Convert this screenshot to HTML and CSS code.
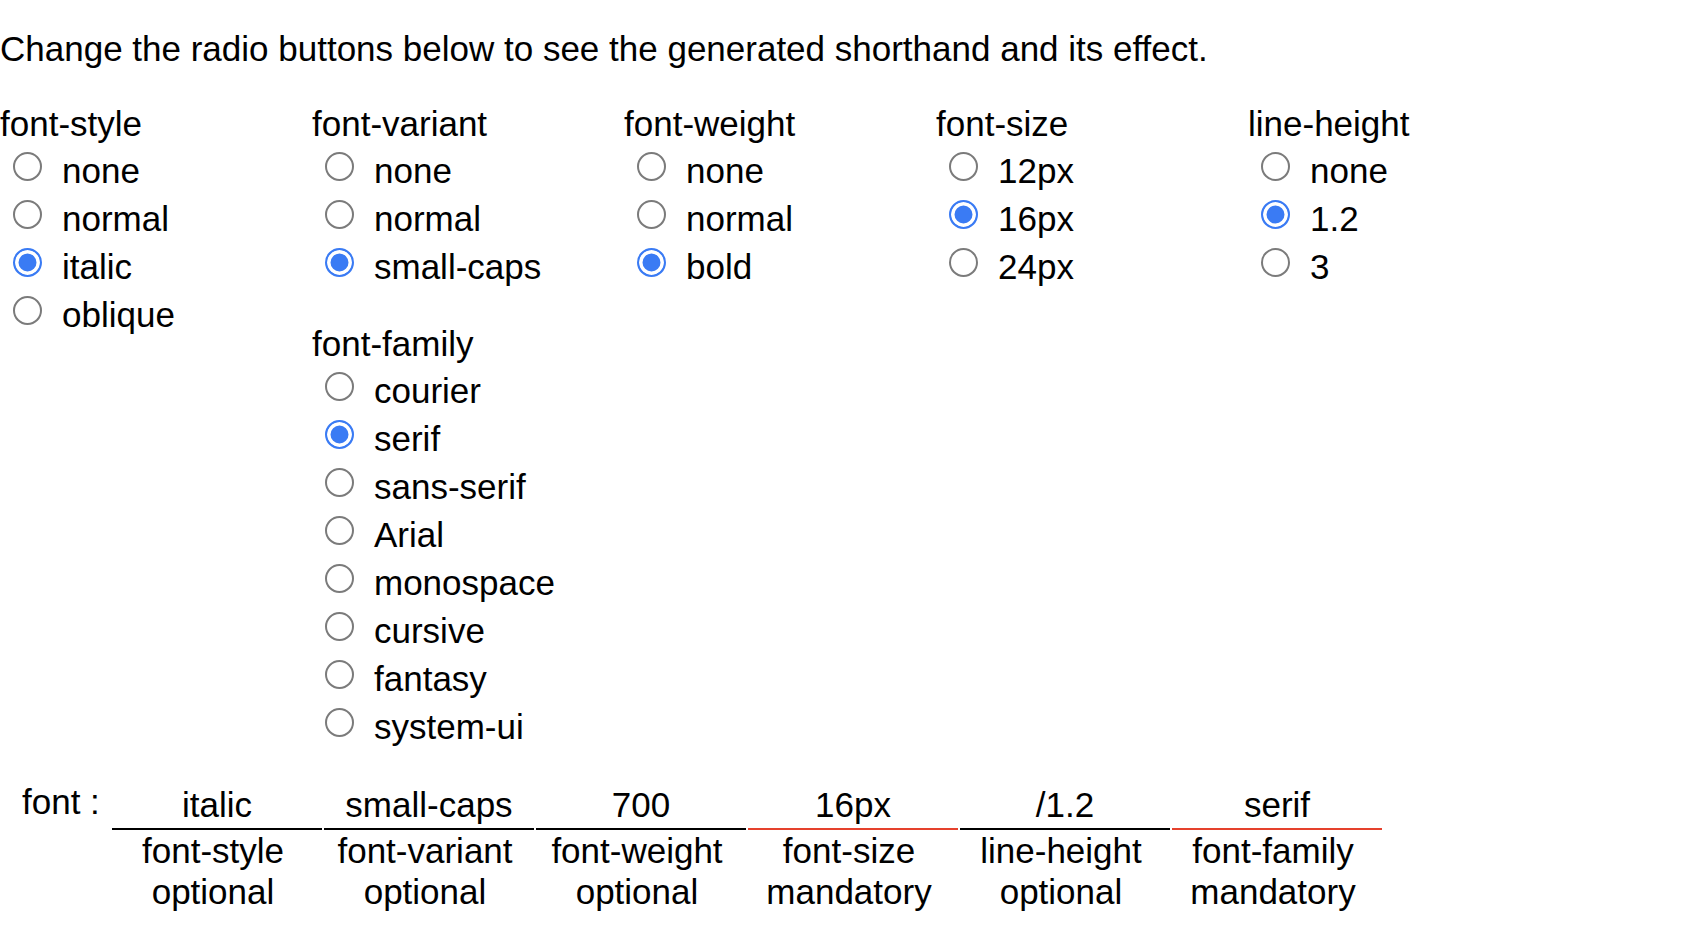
FILE: index.html
```html
<!DOCTYPE html>
<html>
<head>
<meta charset="utf-8">
<link rel="stylesheet" href="styles.css">
</head>
<body>
<p class="intro">Change the radio buttons below to see the generated shorthand and its effect.</p>
<form class="controls">
  <div class="col">
    <div class="group">
      <div class="title">font-style</div>
      <label class="opt"><input type="radio" name="fs"><span>none</span></label>
      <label class="opt"><input type="radio" name="fs"><span>normal</span></label>
      <label class="opt"><input type="radio" name="fs" checked><span>italic</span></label>
      <label class="opt"><input type="radio" name="fs"><span>oblique</span></label>
    </div>
  </div>
  <div class="col">
    <div class="group">
      <div class="title">font-variant</div>
      <label class="opt"><input type="radio" name="fv"><span>none</span></label>
      <label class="opt"><input type="radio" name="fv"><span>normal</span></label>
      <label class="opt"><input type="radio" name="fv" checked><span>small-caps</span></label>
    </div>
    <div class="group family">
      <div class="title">font-family</div>
      <label class="opt"><input type="radio" name="ff"><span>courier</span></label>
      <label class="opt"><input type="radio" name="ff" checked><span>serif</span></label>
      <label class="opt"><input type="radio" name="ff"><span>sans-serif</span></label>
      <label class="opt"><input type="radio" name="ff"><span>Arial</span></label>
      <label class="opt"><input type="radio" name="ff"><span>monospace</span></label>
      <label class="opt"><input type="radio" name="ff"><span>cursive</span></label>
      <label class="opt"><input type="radio" name="ff"><span>fantasy</span></label>
      <label class="opt"><input type="radio" name="ff"><span>system-ui</span></label>
    </div>
  </div>
  <div class="col">
    <div class="group">
      <div class="title">font-weight</div>
      <label class="opt"><input type="radio" name="fw"><span>none</span></label>
      <label class="opt"><input type="radio" name="fw"><span>normal</span></label>
      <label class="opt"><input type="radio" name="fw" checked><span>bold</span></label>
    </div>
  </div>
  <div class="col">
    <div class="group">
      <div class="title">font-size</div>
      <label class="opt"><input type="radio" name="fz"><span>12px</span></label>
      <label class="opt"><input type="radio" name="fz" checked><span>16px</span></label>
      <label class="opt"><input type="radio" name="fz"><span>24px</span></label>
    </div>
  </div>
  <div class="col">
    <div class="group">
      <div class="title">line-height</div>
      <label class="opt"><input type="radio" name="lh"><span>none</span></label>
      <label class="opt"><input type="radio" name="lh" checked><span>1.2</span></label>
      <label class="opt"><input type="radio" name="lh"><span>3</span></label>
    </div>
  </div>
</form>
<div class="result">
  <div class="font-label">font :</div>
  <div class="cell"><div class="val">italic</div><div class="desc">font-style<br>optional</div></div>
  <div class="cell"><div class="val">small-caps</div><div class="desc">font-variant<br>optional</div></div>
  <div class="cell"><div class="val">700</div><div class="desc">font-weight<br>optional</div></div>
  <div class="cell mand"><div class="val">16px</div><div class="desc">font-size<br>mandatory</div></div>
  <div class="cell"><div class="val">/1.2</div><div class="desc">line-height<br>optional</div></div>
  <div class="cell mand"><div class="val">serif</div><div class="desc">font-family<br>mandatory</div></div>
</div>
</body>
</html>
```
FILE: styles.css
```css
html, body {
  margin: 0;
  padding: 0;
  background: #fff;
}
body {
  font-family: "Liberation Sans", Arial, Helvetica, sans-serif;
  font-size: 35px;
  color: #000;
}
.intro {
  margin: 29px 0 0;
  line-height: 40px;
}
.controls {
  display: flex;
  margin-top: 32px;
}
.col {
  width: 312px;
  display: flex;
  flex-direction: column;
}
.group {
  display: flex;
  flex-direction: column;
}
.family {
  margin-top: 30px;
}
.title {
  line-height: 46px;
}
.opt {
  display: block;
  line-height: 48px;
  white-space: nowrap;
}
.opt input {
  -webkit-appearance: none;
  appearance: none;
  box-sizing: border-box;
  width: 29px;
  height: 29px;
  margin: 0 20px 2px 13px;
  border: 2px solid #7b7b7b;
  border-radius: 50%;
  background: #fff;
  vertical-align: baseline;
}
.opt input:checked {
  border-color: #3a7bf4;
  background: #3a7bf4;
  box-shadow: inset 0 0 0 3.5px #fff;
}
.result {
  display: flex;
  gap: 2px;
  margin-top: 33px;
  align-items: flex-start;
}
.font-label {
  width: 88px;
  padding-left: 22px;
  line-height: 36px;
}
.cell {
  width: 210px;
  text-align: center;
}
.val {
  line-height: 38px;
  padding-top: 2px;
  padding-bottom: 4px;
  border-bottom: 2px solid #000;
}
.mand .val {
  border-bottom-color: #e5412d;
}
.desc {
  line-height: 41px;
  padding-right: 8px;
}
```
